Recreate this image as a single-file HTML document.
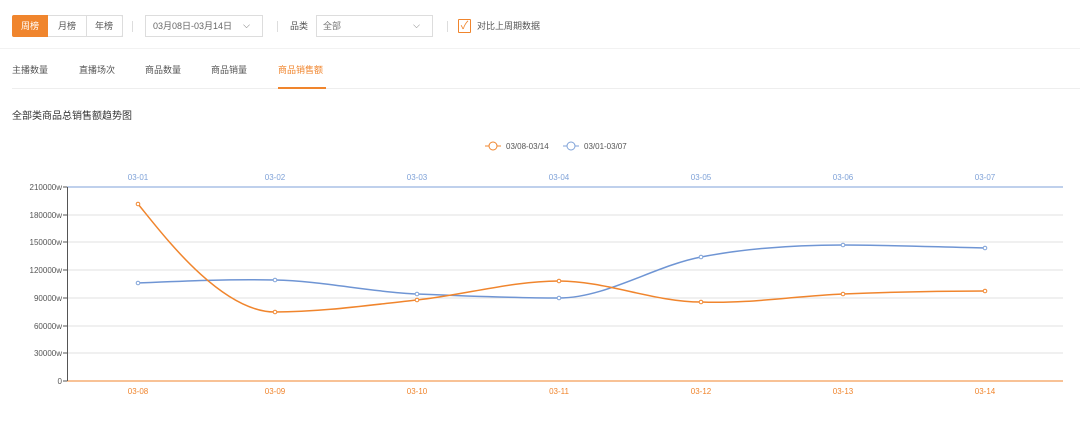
<!DOCTYPE html>
<html><head><meta charset="utf-8"><style>
body{margin:0;width:1080px;height:446px;background:#fff;font-family:"Liberation Sans","Noto Sans CJK SC",sans-serif;position:relative;overflow:hidden;color:#333}
.a{position:absolute;font-size:9px;white-space:nowrap;line-height:12px}
.btn{position:absolute;top:15px;height:22px;border:1px solid #ddd;box-sizing:border-box;font-size:9px;line-height:20px;text-align:center;color:#555}
</style></head><body>
<div class="btn" style="left:12px;width:111px;border-radius:2px"></div>
<div class="btn" style="left:12px;width:36px;background:#f0852d;border-color:#f0852d;color:#fff;border-radius:2px 0 0 2px">周榜</div>
<div class="btn" style="left:48px;width:39px;border-width:1px 1px 1px 0">月榜</div>
<div class="btn" style="left:86px;width:37px;border-width:1px 1px 1px 0">年榜</div>
<div style="position:absolute;left:132px;top:21px;width:1px;height:11px;background:#ddd"></div>
<div class="btn" style="left:145px;width:118px;text-align:left;padding-left:7px;color:#666">03月08日-03月14日 <span style="position:absolute;right:12px;top:-1px">⌵</span></div>
<div style="position:absolute;left:277px;top:21px;width:1px;height:11px;background:#ddd"></div>
<div class="a" style="left:290px;top:20px;color:#555">品类</div>
<div class="btn" style="left:316px;width:117px;text-align:left;padding-left:6px;color:#777">全部<span style="position:absolute;right:12px;top:-1px">⌵</span></div>
<div style="position:absolute;left:447px;top:21px;width:1px;height:11px;background:#ddd"></div>
<div style="position:absolute;left:458px;top:19px;width:13px;height:14px;border:1px solid #f0852d;box-sizing:border-box;border-radius:1px;color:#f0852d;font-size:11px;line-height:12px;text-align:center">✓</div>
<div class="a" style="left:477px;top:20px;color:#555">对比上周期数据</div>
<div style="position:absolute;left:0;top:48px;width:1080px;height:1px;background:#f2f2f2"></div>
<div class="a" style="left:12px;top:64px;color:#555">主播数量</div>
<div class="a" style="left:79px;top:64px;color:#555">直播场次</div>
<div class="a" style="left:145px;top:64px;color:#555">商品数量</div>
<div class="a" style="left:211px;top:64px;color:#555">商品销量</div>
<div class="a" style="left:278px;top:64px;color:#f0852d">商品销售额</div>
<div style="position:absolute;left:12px;top:88px;width:1068px;height:1px;background:#eee"></div>
<div style="position:absolute;left:278px;top:87px;width:48px;height:2px;background:#f0852d"></div>
<div class="a" style="left:12px;top:110px;font-size:10px;line-height:14px;color:#333">全部类商品总销售额趋势图</div>
<svg width="1080" height="446" style="position:absolute;left:0;top:0" font-family="Liberation Sans" font-size="8">
<g stroke="#f0852d" fill="none"><line x1="485" y1="146" x2="501" y2="146"/><circle cx="493" cy="146" r="4" fill="#fff"/></g>
<text x="506" y="149" fill="#555">03/08-03/14</text>
<g stroke="#7fa2d8" fill="none"><line x1="563" y1="146" x2="579" y2="146"/><circle cx="571" cy="146" r="4" fill="#fff"/></g>
<text x="584" y="149" fill="#555">03/01-03/07</text>
<g stroke="#e2e2e2"><line x1="67" y1="215" x2="1063" y2="215"/><line x1="67" y1="242" x2="1063" y2="242"/><line x1="67" y1="270" x2="1063" y2="270"/><line x1="67" y1="298" x2="1063" y2="298"/><line x1="67" y1="326" x2="1063" y2="326"/><line x1="67" y1="353" x2="1063" y2="353"/></g>
<line x1="67" y1="187" x2="1063" y2="187" stroke="#7fa2d8"/>
<line x1="67" y1="381" x2="1063" y2="381" stroke="#f0852d"/>
<line x1="67.5" y1="187" x2="67.5" y2="381" stroke="#555"/>
<g fill="#555" text-anchor="end"><text x="62" y="190">210000w</text><text x="62" y="218">180000w</text><text x="62" y="245">150000w</text><text x="62" y="273">120000w</text><text x="62" y="301">90000w</text><text x="62" y="329">60000w</text><text x="62" y="356">30000w</text><text x="62" y="384">0</text></g>
<g stroke="#555"><line x1="63" y1="187" x2="67" y2="187"/><line x1="63" y1="215" x2="67" y2="215"/><line x1="63" y1="242" x2="67" y2="242"/><line x1="63" y1="270" x2="67" y2="270"/><line x1="63" y1="298" x2="67" y2="298"/><line x1="63" y1="326" x2="67" y2="326"/><line x1="63" y1="353" x2="67" y2="353"/><line x1="63" y1="381" x2="67" y2="381"/></g>
<g fill="#7fa2d8" text-anchor="middle"><text x="138" y="180">03-01</text><text x="275" y="180">03-02</text><text x="417" y="180">03-03</text><text x="559" y="180">03-04</text><text x="701" y="180">03-05</text><text x="843" y="180">03-06</text><text x="985" y="180">03-07</text></g>
<g fill="#f0852d" text-anchor="middle"><text x="138" y="394">03-08</text><text x="275" y="394">03-09</text><text x="417" y="394">03-10</text><text x="559" y="394">03-11</text><text x="701" y="394">03-12</text><text x="843" y="394">03-13</text><text x="985" y="394">03-14</text></g>
<path d="M138,283 C184,281 229,279 275,280 C322,281 370,292 417,294 C464,296 512,298 559,298 C606,298 654,266 701,257 C748,248 796,245 843,245 C890,245 938,247 985,248" stroke="#6f95d4" stroke-width="1.5" fill="none"/>
<path d="M138,204 C161,232 220,312 275,312 C322,312 370,305 417,300 C464,295 512,281 559,281 C606,281 654,302 701,302 C748,304 796,296 843,294 C890,292 938,291 985,291" stroke="#f0852d" stroke-width="1.5" fill="none"/>
<g fill="#fff" stroke="#7fa2d8"><circle cx="138" cy="283" r="1.8"/><circle cx="275" cy="280" r="1.8"/><circle cx="417" cy="294" r="1.8"/><circle cx="559" cy="298" r="1.8"/><circle cx="701" cy="257" r="1.8"/><circle cx="843" cy="245" r="1.8"/><circle cx="985" cy="248" r="1.8"/></g>
<g fill="#fff" stroke="#f0852d"><circle cx="138" cy="204" r="1.8"/><circle cx="275" cy="312" r="1.8"/><circle cx="417" cy="300" r="1.8"/><circle cx="559" cy="281" r="1.8"/><circle cx="701" cy="302" r="1.8"/><circle cx="843" cy="294" r="1.8"/><circle cx="985" cy="291" r="1.8"/></g>
</svg>
</body></html>
